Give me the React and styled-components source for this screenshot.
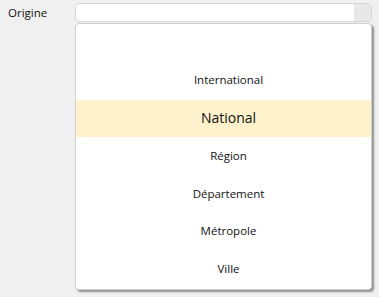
import React from 'react';
import styled, {createGlobalStyle} from 'styled-components';

const GlobalStyle = createGlobalStyle`
  html, body {
    margin: 0;
    padding: 0;
    background: #f0f0f0;
  }
  body {
    font-family: "Open Sans", "Noto Sans", sans-serif;
    color: #111;
  }
`;

const Page = styled.div`
  display: flex;
  align-items: flex-start;
  padding-top: 3px;
  height: 294px;
`;

const Label = styled.div`
  width: 67px;
  padding-left: 8px;
  font-size: 11.5px;
  line-height: 19px;
`;

const Field = styled.div`
  width: 297px;
  display: flex;
  flex-direction: column;
`;

const Select = styled.div`
  height: 17px;
  display: flex;
  border: 1px solid #d6d6d6;
  border-radius: 4px;
  background: #fff;
  overflow: hidden;
`;

const SelectValue = styled.div`
  flex: 1;
`;

const SelectButton = styled.div`
  width: 17px;
  background: #e8e8e8;
`;

const List = styled.ul`
  list-style: none;
  margin: 1px 0 0;
  padding: 0;
  background: #fff;
  border: 1px solid #cfcfcf;
  border-radius: 4px;
  box-shadow: 2px 2px 2px rgba(0, 0, 0, 0.4);
  overflow: hidden;
`;

const Option = styled.li`
  height: 37.8px;
  display: flex;
  align-items: center;
  justify-content: center;
  padding: 0 0 2px 10px;
  box-sizing: border-box;
  font-size: ${p => (p.active ? '14px' : '11.5px')};
  background: ${p => (p.active ? '#fff2cc' : 'transparent')};
`;

const options = ['', 'International', 'National', 'Région', 'Département', 'Métropole', 'Ville'];

export default function App() {
  return (
    <>
      <GlobalStyle/>
      <Page>
        <Label>Origine</Label>
        <Field>
          <Select>
            <SelectValue/>
            <SelectButton/>
          </Select>
          <List>
            {options.map(o => (
              <Option key={o} active={o === 'National'}>{o}</Option>
            ))}
          </List>
        </Field>
      </Page>
    </>
  );
}
